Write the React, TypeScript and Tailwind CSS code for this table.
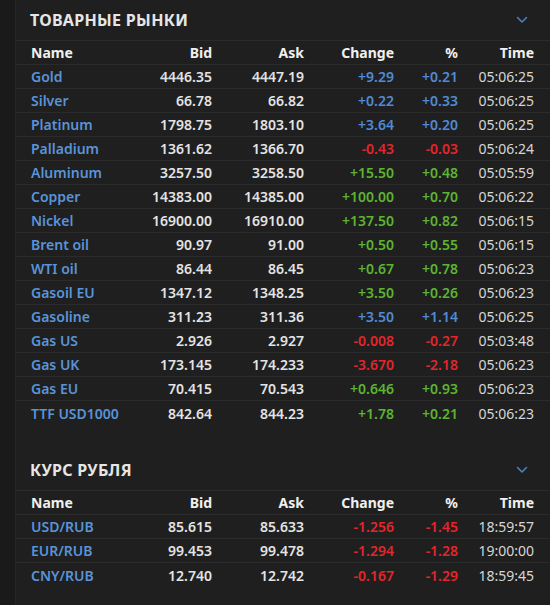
import React from "react";

type Row = {
  name: string;
  bid: string;
  ask: string;
  change: string;
  pct: string;
  time: string;
  tone: "blue" | "green" | "red";
};

const commodities: Row[] = [
  { name: "Gold", bid: "4446.35", ask: "4447.19", change: "+9.29", pct: "+0.21", time: "05:06:25", tone: "blue" },
  { name: "Silver", bid: "66.78", ask: "66.82", change: "+0.22", pct: "+0.33", time: "05:06:25", tone: "blue" },
  { name: "Platinum", bid: "1798.75", ask: "1803.10", change: "+3.64", pct: "+0.20", time: "05:06:25", tone: "blue" },
  { name: "Palladium", bid: "1361.62", ask: "1366.70", change: "-0.43", pct: "-0.03", time: "05:06:24", tone: "red" },
  { name: "Aluminum", bid: "3257.50", ask: "3258.50", change: "+15.50", pct: "+0.48", time: "05:05:59", tone: "green" },
  { name: "Copper", bid: "14383.00", ask: "14385.00", change: "+100.00", pct: "+0.70", time: "05:06:22", tone: "green" },
  { name: "Nickel", bid: "16900.00", ask: "16910.00", change: "+137.50", pct: "+0.82", time: "05:06:15", tone: "green" },
  { name: "Brent oil", bid: "90.97", ask: "91.00", change: "+0.50", pct: "+0.55", time: "05:06:15", tone: "green" },
  { name: "WTI oil", bid: "86.44", ask: "86.45", change: "+0.67", pct: "+0.78", time: "05:06:23", tone: "green" },
  { name: "Gasoil EU", bid: "1347.12", ask: "1348.25", change: "+3.50", pct: "+0.26", time: "05:06:23", tone: "green" },
  { name: "Gasoline", bid: "311.23", ask: "311.36", change: "+3.50", pct: "+1.14", time: "05:06:25", tone: "blue" },
  { name: "Gas US", bid: "2.926", ask: "2.927", change: "-0.008", pct: "-0.27", time: "05:03:48", tone: "red" },
  { name: "Gas UK", bid: "173.145", ask: "174.233", change: "-3.670", pct: "-2.18", time: "05:06:23", tone: "red" },
  { name: "Gas EU", bid: "70.415", ask: "70.543", change: "+0.646", pct: "+0.93", time: "05:06:23", tone: "green" },
  { name: "TTF USD1000", bid: "842.64", ask: "844.23", change: "+1.78", pct: "+0.21", time: "05:06:23", tone: "green" },
];

const rouble: Row[] = [
  { name: "USD/RUB", bid: "85.615", ask: "85.633", change: "-1.256", pct: "-1.45", time: "18:59:57", tone: "red" },
  { name: "EUR/RUB", bid: "99.453", ask: "99.478", change: "-1.294", pct: "-1.28", time: "19:00:00", tone: "red" },
  { name: "CNY/RUB", bid: "12.740", ask: "12.742", change: "-0.167", pct: "-1.29", time: "18:59:45", tone: "red" },
];

const toneClass = {
  blue: "text-[#4f8bd6]",
  green: "text-[#5cb531]",
  red: "text-[#e3262b]",
};

const cols = "grid grid-cols-[110px_71px_92px_90px_64px_76px] items-center";

const Chevron = () => (
  <svg width="12" height="8" viewBox="0 0 12 8" fill="none">
    <path d="M1.5 1.5 L6 6 L10.5 1.5" stroke="#4a7fc0" strokeWidth="1.6" strokeLinecap="round" strokeLinejoin="round" />
  </svg>
);

const Section = ({ title, rows }: { title: string; rows: Row[] }) => (
  <div>
    <div className="flex items-center justify-between h-[41px] pl-[14px] pr-[22px] border-b border-[#2b2b2b]">
      <h2 className="text-[16px] font-bold text-[#e6e6e6] tracking-[0.3px]">{title}</h2>
      <Chevron />
    </div>
    <div className={`${cols} h-[24px] px-[15px] border-b border-[#2b2b2b] text-[14px] font-bold text-[#f0f0f0]`}>
      <div>Name</div>
      <div className="text-right">Bid</div>
      <div className="text-right">Ask</div>
      <div className="text-right">Change</div>
      <div className="text-right">%</div>
      <div className="text-right">Time</div>
    </div>
    {rows.map((r, i) => (
      <div
        key={r.name}
        className={`${cols} h-[24px] px-[15px] text-[14px] ${i < rows.length - 1 ? "border-b border-[#2b2b2b]" : ""}`}
      >
        <div className="font-semibold text-[#5a93d8] whitespace-nowrap">{r.name}</div>
        <div className="text-right font-semibold text-[#e4e4e4]">{r.bid}</div>
        <div className="text-right font-semibold text-[#e4e4e4]">{r.ask}</div>
        <div className={`text-right font-semibold ${toneClass[r.tone]}`}>{r.change}</div>
        <div className={`text-right font-semibold ${toneClass[r.tone]}`}>{r.pct}</div>
        <div className="text-right text-[#d6d6d6]">{r.time}</div>
      </div>
    ))}
  </div>
);

export default function App() {
  return (
    <div className="w-[550px] h-[605px] bg-[#1a1a1a] overflow-hidden" style={{ fontFamily: '"Noto Sans", "Open Sans", sans-serif' }}>
      <div className="ml-[15px] h-full bg-[#1f1f1f] border-l border-[#262626]">
        <Section title="ТОВАРНЫЕ РЫНКИ" rows={commodities} />
        <div className="h-[25px]" />
        <Section title="КУРС РУБЛЯ" rows={rouble} />
      </div>
    </div>
  );
}
